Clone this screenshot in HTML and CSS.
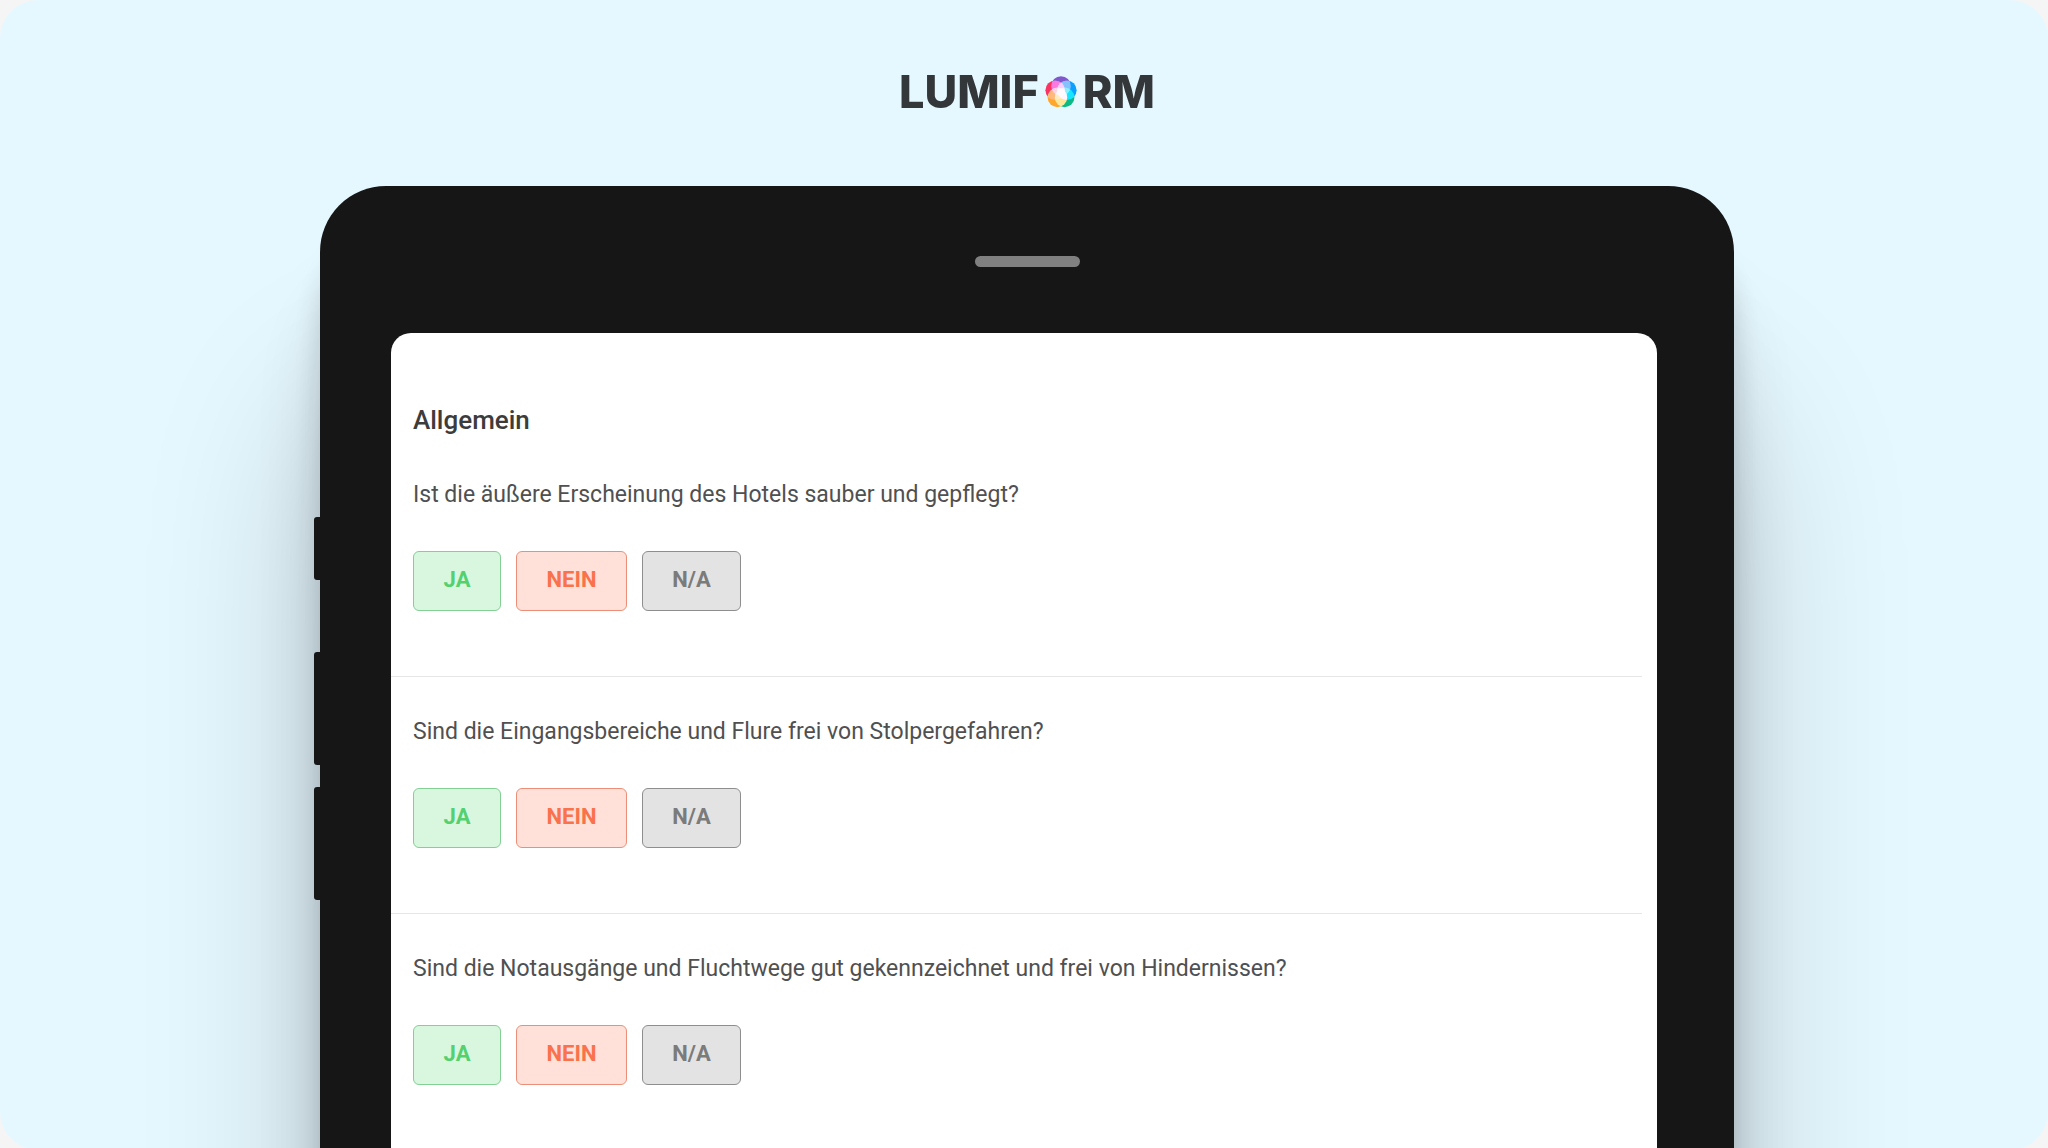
FILE: index.html
```html
<!DOCTYPE html>
<html lang="de">
<head>
<meta charset="utf-8">
<meta name="viewport" content="width=device-width, initial-scale=1">
<title>Lumiform</title>
<link rel="stylesheet" href="styles.css">
</head>
<body>
<div class="stage">
  <header class="brand">
    <span>LUMIF</span>
    <svg class="orb" viewBox="0 0 32 32" role="img" aria-label="O">
      <g class="petals">
        <circle cx="16" cy="10" r="9.8" fill="#8058cc"/>
        <circle cx="21.8" cy="14.2" r="9.8" fill="#0aa0ff"/>
        <circle cx="19.6" cy="21.4" r="9.8" fill="#0cba86"/>
        <circle cx="12.4" cy="21.4" r="9.8" fill="#ffa72c"/>
        <circle cx="10.2" cy="14.2" r="9.8" fill="#f73462"/>
      </g>
    </svg>
    <span>RM</span>
  </header>

  <div class="device">
    <i class="key key-power"></i>
    <i class="key key-up"></i>
    <i class="key key-down"></i>
    <div class="speaker"></div>
    <main class="screen">
      <h1 class="section-title">Allgemein</h1>
      <section class="question">
        <h2 class="prompt" id="q1">Ist die äußere Erscheinung des Hotels sauber und gepflegt?</h2>
        <div class="answers" role="group" aria-labelledby="q1">
          <button type="button" class="answer yes">JA</button>
          <button type="button" class="answer no">NEIN</button>
          <button type="button" class="answer na">N/A</button>
        </div>
      </section>
      <section class="question">
        <h2 class="prompt" id="q2">Sind die Eingangsbereiche und Flure frei von Stolpergefahren?</h2>
        <div class="answers" role="group" aria-labelledby="q2">
          <button type="button" class="answer yes">JA</button>
          <button type="button" class="answer no">NEIN</button>
          <button type="button" class="answer na">N/A</button>
        </div>
      </section>
      <section class="question">
        <h2 class="prompt" id="q3">Sind die Notausgänge und Fluchtwege gut gekennzeichnet und frei von Hindernissen?</h2>
        <div class="answers" role="group" aria-labelledby="q3">
          <button type="button" class="answer yes">JA</button>
          <button type="button" class="answer no">NEIN</button>
          <button type="button" class="answer na">N/A</button>
        </div>
      </section>
    </main>
  </div>
</div>
</body>
</html>
```
FILE: styles.css
```css
* {
  box-sizing: border-box;
}

body {
  margin: 0;
  background: #f5f5f5;
  font-family: Roboto, "Liberation Sans", sans-serif;
}

.stage {
  display: flex;
  flex-direction: column;
  min-height: 100vh;
  padding: 66px 314px 0 320px;
  border-radius: 38px;
  background: #e6f8ff;
  overflow: hidden;
}

.brand {
  display: flex;
  align-items: center;
  justify-content: center;
  gap: 6px;
  margin-bottom: 68px;
  color: #33373a;
  font: 800 45px/52px Inter, sans-serif;
}

.orb {
  width: 32px;
  height: 32px;
}

.petals {
  isolation: isolate;
}

.petals circle {
  mix-blend-mode: screen;
}

.device {
  position: relative;
  display: flex;
  flex: 1;
  flex-direction: column;
  padding-top: 70px;
  border-radius: 66px 66px 0 0;
  background: #161616;
  box-shadow:
    0 60px 30px rgba(0, 0, 0, 0.15),
    0 110px 80px rgba(0, 0, 0, 0.12),
    0 220px 180px rgba(0, 0, 0, 0.2);
}

.key {
  position: absolute;
  left: -6px;
  width: 6px;
  height: 113px;
  border-radius: 3px 0 0 3px;
  background: #161616;
}

.key-power {
  top: 331px;
  height: 63px;
}

.key-up {
  top: 466px;
}

.key-down {
  top: 601px;
}

.speaker {
  align-self: center;
  width: 105px;
  height: 11px;
  margin-bottom: 66px;
  border-radius: 6px;
  background: #808080;
}

.screen {
  flex: 1;
  margin: 0 77px 0 71px;
  padding: 69px 15px 0 0;
  border-radius: 20px 20px 0 0;
  background: #fff;
}

.section-title {
  margin: 0 0 2px;
  padding-left: 22px;
  color: #3c3c3c;
  font-size: 26px;
  font-weight: 500;
  line-height: 36px;
}

.question {
  padding: 37px 0 65px 22px;
}

.question + .question {
  border-top: 1px solid #e6e6e6;
}

.prompt {
  margin: 0 0 38px;
  color: #505050;
  font-size: 23px;
  font-weight: 400;
  line-height: 36px;
}

.answers {
  display: flex;
  gap: 15px;
}

.answer {
  height: 60px;
  padding: 0 0 2px;
  border: 1px solid;
  border-radius: 6px;
  font: 700 22px/28px Roboto, "Liberation Sans", sans-serif;
}

.yes {
  width: 88px;
  border-color: #84cf95;
  background: #d9f7df;
  color: #55d06f;
}

.no {
  width: 111px;
  border-color: #ec8f78;
  background: #ffe1d9;
  color: #f9724b;
}

.na {
  width: 99px;
  border-color: #8e8e8e;
  background: #e3e3e3;
  color: #7b7b7b;
}
```
